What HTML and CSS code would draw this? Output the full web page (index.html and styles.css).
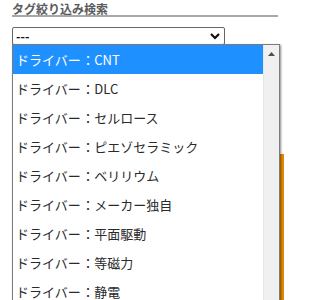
FILE: index.html
```html
<!DOCTYPE html>
<html lang="ja">
<head>
<meta charset="utf-8">
<link rel="stylesheet" href="styles.css">
</head>
<body>
<div class="panel">
  <h2 class="title">タグ絞り込み検索</h2>
  <div class="select">
    <span class="select-value">---</span>
    <svg class="chevron" width="10" height="7" viewBox="0 0 10 7"><polyline points="1,1 5,5 9,1" fill="none" stroke="#111" stroke-width="2.2"/></svg>
  </div>
  <div class="banner"></div>
  <div class="dropdown">
    <ul class="options">
      <li class="opt selected">ドライバー<span class="sep">：</span>CNT</li>
      <li class="opt">ドライバー<span class="sep">：</span>DLC</li>
      <li class="opt">ドライバー<span class="sep">：</span>セルロース</li>
      <li class="opt">ドライバー<span class="sep">：</span>ピエゾセラミック</li>
      <li class="opt">ドライバー<span class="sep">：</span>ベリリウム</li>
      <li class="opt">ドライバー<span class="sep">：</span>メーカー独自</li>
      <li class="opt">ドライバー<span class="sep">：</span>平面駆動</li>
      <li class="opt">ドライバー<span class="sep">：</span>等磁力</li>
      <li class="opt">ドライバー<span class="sep">：</span>静電</li>
    </ul>
    <div class="scrollbar">
      <svg class="up" width="7" height="4" viewBox="0 0 7 4"><polygon points="0,4 3.5,0 7,4" fill="#505050"/></svg>
    </div>
  </div>
</div>
</body>
</html>
```
FILE: styles.css
```css
html, body {
  margin: 0;
  padding: 0;
  background: #fff;
}
body {
  font-family: "Noto Sans CJK JP", "Noto Sans", sans-serif;
  color: #222;
}
.panel {
  position: relative;
  padding: 2px 0 0 12px;
  height: 298px;
  overflow: hidden;
}
.title {
  margin: 0;
  width: 266px;
  font-size: 12px;
  line-height: 13px;
  font-weight: bold;
  color: #5c5c5c;
  border-bottom: 2px solid #a8a8a8;
}
.select {
  margin-top: 10px;
  width: 213px;
  height: 18px;
  box-sizing: border-box;
  border: 1px solid #666;
  border-radius: 2px;
  display: flex;
  align-items: center;
  justify-content: space-between;
  padding: 0 4px 0 3px;
  font-size: 12px;
}
.select-value {
  line-height: 14px;
  color: #111;
  font-weight: bold;
}
.chevron {
  display: block;
}
.banner {
  margin-top: 109px;
  width: 272px;
  height: 150px;
  background: #e28a00;
}
.dropdown {
  position: absolute;
  left: 12px;
  top: 44px;
  width: 268px;
  height: 270px;
  box-sizing: border-box;
  border: 1px solid #7c7c7c;
  background: #fff;
  box-shadow: 1px 1px 2px rgba(0, 0, 0, 0.45);
  display: flex;
}
.options {
  list-style: none;
  margin: 0;
  padding: 0;
  flex: 1;
}
.opt {
  height: 29px;
  line-height: 29px;
  padding-left: 3px;
  font-size: 13px;
  color: #2a2a2a;
  white-space: nowrap;
}
.opt.selected {
  background: #1e90ff;
  color: #fff;
}
.sep {
  display: inline-block;
  font-feature-settings: "halt";
  margin: 0 3px 0 4px;
}
.scrollbar {
  width: 16px;
  background: #f0f0f0;
  border-left: 1px solid #e6e6e6;
  display: flex;
  justify-content: center;
  align-items: flex-start;
  padding-top: 7px;
  box-sizing: border-box;
}
.up {
  display: block;
}
```
